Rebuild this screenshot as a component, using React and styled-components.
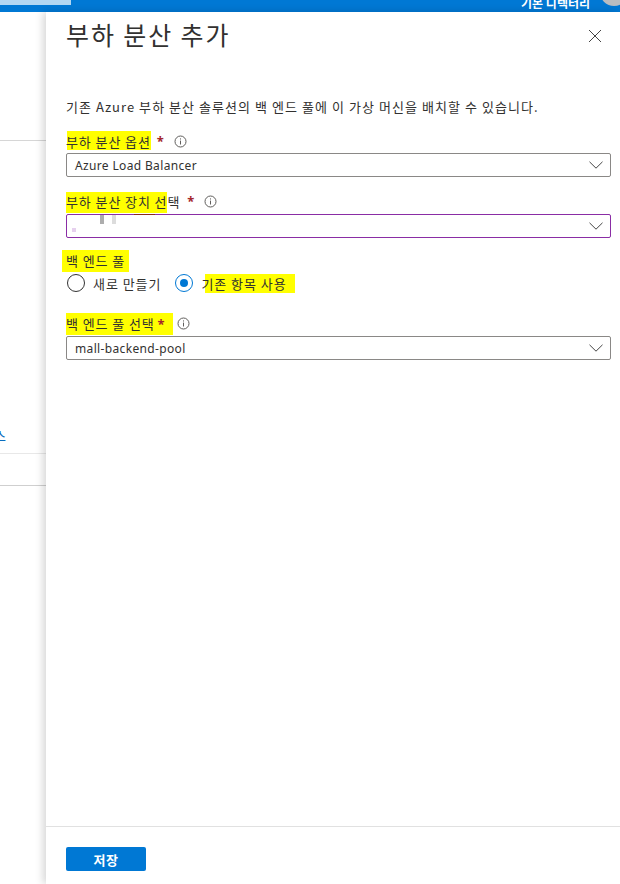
import styled, { createGlobalStyle } from "styled-components"

const GlobalStyle = createGlobalStyle`
  html, body {
    margin: 0;
    padding: 0;
    background: #fff;
  }
  body {
    font-family: "Noto Sans", "Noto Sans CJK KR", sans-serif;
    color: #323130;
  }
`;

const Page = styled.div`
  width: 620px;
  height: 884px;
  display: flex;
  flex-direction: column;
  overflow: hidden;
`;

const TopBar = styled.div`
  height: 12px;
  flex: none;
  background: #0078d4;
  display: flex;
  justify-content: space-between;
  align-items: flex-end;
  overflow: hidden;
`;

const TopTab = styled.div`
  width: 71px;
  height: 5px;
  align-self: flex-start;
  background: #b3d7f2;
`;

const Account = styled.div`
  display: flex;
  align-items: flex-end;
  gap: 10px;
`;

const Directory = styled.div`
  font-family: "Noto Sans CJK KR", sans-serif;
  font-size: 12px;
  font-weight: 700;
  line-height: 12px;
  color: #fff;
  margin-bottom: 3px;
`;

const Avatar = styled.div`
  width: 28px;
  height: 28px;
  flex: none;
  border-radius: 50%;
  background: #b9bcc0;
  margin-bottom: 6px;
  margin-right: -8px;
`;

const Body = styled.div`
  flex: 1;
  display: flex;
  min-height: 0;
`;

const Behind = styled.div`
  width: 46px;
  flex: none;
  display: flex;
  flex-direction: column;
`;

const Rule = styled.div`
  height: 1px;
  background: ${(props) => props.$color};
  margin-top: ${(props) => props.$top}px;
`;

const CutOff = styled.div`
  font-family: "Noto Sans CJK KR", sans-serif;
  font-size: 13px;
  line-height: 20px;
  height: 20px;
  width: 6px;
  overflow: hidden;
  color: #0b6cbd;
  margin-top: 285px;
  direction: rtl;
`;

const Panel = styled.div`
  flex: 1;
  display: flex;
  flex-direction: column;
  background: #fff;
  box-shadow: -3px 0 8px rgba(0, 0, 0, 0.16);
`;

const Content = styled.div`
  flex: 1;
  padding: 0 9px 0 20px;
`;

const Header = styled.div`
  display: flex;
  justify-content: space-between;
  align-items: flex-start;
`;

const Title = styled.h1`
  margin: 0;
  font-family: "Noto Sans CJK KR", sans-serif;
  font-size: 25px;
  font-weight: 400;
  line-height: 44px;
  letter-spacing: 1.9px;
`;

const CloseButton = styled.button`
  border: 0;
  padding: 0;
  background: none;
  width: 14px;
  height: 14px;
  margin: 17px 9px 0 0;
  color: #444;
  display: flex;
`;

const Desc = styled.p`
  margin: 41px 0 0;
  font-family: "Noto Sans CJK KR", sans-serif;
  font-size: 13px;
  line-height: 20px;
  letter-spacing: 1.05px;
  white-space: nowrap;
`;

const Label = styled.div`
  display: flex;
  align-items: center;
  height: 20px;
  margin-top: ${(props) => props.$top}px;
  font-family: "Noto Sans CJK KR", sans-serif;
  font-size: 13px;
  letter-spacing: 0.9px;
  white-space: pre;
`;

const Mark = styled.span`
  position: relative;
  z-index: 0;
  &::before {
    content: "";
    position: absolute;
    z-index: -1;
    left: ${(props) => props.$left}px;
    right: ${(props) => props.$right}px;
    top: ${(props) => props.$over}px;
    bottom: ${(props) => props.$under}px;
    background: #ffff00;
  }
`;

const Star = styled.span`
  font-family: "Noto Sans", sans-serif;
  font-size: 13px;
  font-weight: 700;
  color: #a4262c;
  margin-left: ${(props) => props.$gap}px;
`;

const Info = styled.svg`
  width: 13px;
  height: 13px;
  flex: none;
  margin-left: ${(props) => props.$gap}px;
  color: #605e5c;
`;

const Select = styled.div`
  position: relative;
  height: 24px;
  box-sizing: border-box;
  margin-top: ${(props) => props.$top}px;
  border: 1px solid ${(props) => props.$border};
  border-radius: 2px;
  padding: 0 7px 0 8px;
  display: flex;
  align-items: center;
  justify-content: space-between;
  font-size: 12px;
  letter-spacing: 0.35px;
`;

const Chevron = styled.svg`
  width: 14px;
  height: 8px;
  color: #444;
`;

const Smudge = styled.span`
  position: absolute;
  left: ${(props) => props.$x}px;
  top: ${(props) => props.$y}px;
  width: ${(props) => props.$w}px;
  height: ${(props) => props.$h}px;
  background: ${(props) => props.$color};
`;

const RadioRow = styled.div`
  display: flex;
  align-items: center;
  margin-top: 4px;
  height: 18px;
`;

const RadioItem = styled.label`
  display: flex;
  align-items: center;
  gap: 8px;
  margin-right: 13px;
  font-family: "Noto Sans CJK KR", sans-serif;
  font-size: 13px;
  letter-spacing: 0.95px;
`;

const RadioDot = styled.span`
  width: 18px;
  height: 18px;
  box-sizing: border-box;
  margin-left: 1px;
  border-radius: 50%;
  border: 1.5px solid ${(props) => (props.$on ? "#0078d4" : "#333")};
  display: flex;
  align-items: center;
  justify-content: center;
  &::after {
    content: "";
    display: ${(props) => (props.$on ? "block" : "none")};
    width: 8px;
    height: 8px;
    border-radius: 50%;
    background: #0078d4;
  }
`;

const Footer = styled.div`
  height: 58px;
  flex: none;
  box-sizing: border-box;
  border-top: 1px solid #e1e1e1;
  padding: 20px 0 0 20px;
`;

const SaveButton = styled.button`
  width: 80px;
  height: 24px;
  border: 0;
  border-radius: 2px;
  padding: 0;
  background: #0078d4;
  color: #fff;
  font-family: "Noto Sans CJK KR", sans-serif;
  font-size: 13px;
  font-weight: 700;
  letter-spacing: 0.6px;
`;

const InfoIcon = ({ gap }) => (
  <Info $gap={gap} viewBox="0 0 13 13" fill="none" stroke="currentColor">
    <circle cx="6.5" cy="6.5" r="5.5" strokeWidth="1" />
    <path d="M6.5 5.6v3.9" strokeWidth="1" />
    <path d="M6.5 3.4v1.1" strokeWidth="1" />
  </Info>
);

const Arrow = () => (
  <Chevron viewBox="0 0 14 8" fill="none" stroke="currentColor" strokeWidth="1">
    <path d="M.5.8 7 7.2 13.5.8" />
  </Chevron>
);

export default function App() {
  return (
    <Page>
      <GlobalStyle />
      <TopBar>
        <TopTab />
        <Account>
          <Directory>기본 디렉터리</Directory>
          <Avatar />
        </Account>
      </TopBar>
      <Body>
        <Behind>
          <Rule $color="#d6d6d6" $top={128} />
          <CutOff>스</CutOff>
          <Rule $color="#e8e8e8" $top={7} />
          <Rule $color="#cfcfcf" $top={31} />
        </Behind>
        <Panel>
          <Content>
            <Header>
              <Title>부하 분산 추가</Title>
              <CloseButton aria-label="닫기">
                <svg width="14" height="14" viewBox="0 0 14 14" fill="none" stroke="currentColor" strokeWidth="1">
                  <path d="M1 1l12 12M13 1 1 13" />
                </svg>
              </CloseButton>
            </Header>
            <Desc>기존 Azure 부하 분산 솔루션의 백 엔드 풀에 이 가상 머신을 배치할 수 있습니다.</Desc>

            <Label $top={14}>
              <Mark $left={1} $right={0} $over={-1} $under={1}>부하 분산 옵션</Mark>
              <Star $gap={6}>*</Star>
              <InfoIcon gap={9} />
            </Label>
            <Select $top={2} $border="#8a8886">
              Azure Load Balancer
              <Arrow />
            </Select>

            <Label $top={14}>
              <Mark $left={0} $right={0} $over={0} $under={-2}>부하 분산 장치 선</Mark>택
              <Star $gap={7}>*</Star>
              <InfoIcon gap={9} />
            </Label>
            <Select $top={3} $border="#8a2da5">
              <Smudge $x={33} $y={0} $w={4} $h={9} $color="#adadad" />
              <Smudge $x={45} $y={0} $w={4} $h={9} $color="#dcdcdc" />
              <Smudge $x={5} $y={13} $w={4} $h={4} $color="#e6d0ee" />
              <Smudge $x={67} $y={-1} $w={21} $h={1} $color="#8a2a1c" />
              <span />
              <Arrow />
            </Select>

            <Label $top={12}>
              <Mark $left={-4} $right={-4} $over={-1} $under={-2}>백 엔드 풀</Mark>
            </Label>
            <RadioRow>
              <RadioItem>
                <RadioDot />
                새로 만들기
              </RadioItem>
              <RadioItem>
                <RadioDot $on />
                <Mark $left={4} $right={-8} $over={0} $under={0}>기존 항목 사용</Mark>
              </RadioItem>
            </RadioRow>

            <Label $top={21}>
              <Mark $left={0} $right={-7} $over={-1} $under={-2}>
                백 엔드 풀 선택
                <Star $gap={3}>*</Star>
              </Mark>
              <InfoIcon gap={11} />
            </Label>
            <Select $top={3} $border="#8a8886">
              mall-backend-pool
              <Arrow />
            </Select>
          </Content>
          <Footer>
            <SaveButton>저장</SaveButton>
          </Footer>
        </Panel>
      </Body>
    </Page>
  );
}
